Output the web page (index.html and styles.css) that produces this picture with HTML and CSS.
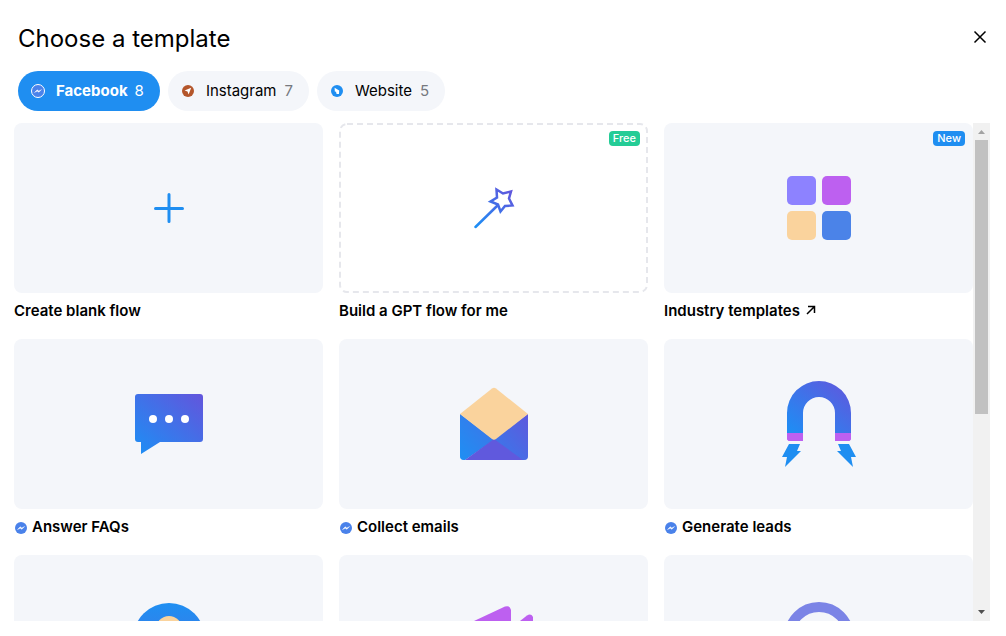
FILE: index.html
```
<!DOCTYPE html>
<html lang="en">
<head>
<meta charset="utf-8">
<title>Choose a template</title>
<link rel="stylesheet" href="styles.css">
</head>
<body>
<svg class="defs" aria-hidden="true">
  <defs>
    <linearGradient id="blend" x1="0" y1="1" x2="1" y2="0">
      <stop offset="0" stop-color="#1c8ff5"/>
      <stop offset="1" stop-color="#6355dc"/>
    </linearGradient>
    <linearGradient id="rise" x1="0" y1="0" x2="0" y2="1">
      <stop offset="0" stop-color="#1f8ff2"/>
      <stop offset="1" stop-color="#4a6ee0"/>
    </linearGradient>
    <symbol id="messenger" viewBox="0 0 12 12">
      <circle cx="6" cy="6" r="6" fill="#4a82ea"/>
      <path d="M2.5 7.6 5.2 4.8 6.8 6 9.6 4.5 6.9 7.3 5.3 6.2Z" fill="#fff" stroke="#fff" stroke-width=".4"/>
    </symbol>
  </defs>
</svg>
<main class="dialog">
  <header class="header">
    <h1 class="title">Choose a template</h1>
    <button class="close" type="button" aria-label="Close">
      <svg width="14" height="14" viewBox="0 0 14 14"><path d="M1.5 1.5 12.5 12.5M12.5 1.5 1.5 12.5" stroke="#000" stroke-width="1.5" fill="none"/></svg>
    </button>
  </header>
  <nav class="tabs">
    <button class="tab tab-active" type="button">
      <svg class="tab-icon" viewBox="0 0 16 16"><circle cx="8" cy="8" r="6.5" fill="#4a82ea" stroke="#fff"/><path d="M4.4 9.6 7.2 6.8 8.8 8 11.6 6.5 8.9 9.3 7.3 8.2Z" fill="#fff" stroke="#fff" stroke-width=".3"/></svg>
      <span class="tab-name">Facebook</span><span class="count">8</span>
    </button>
    <button class="tab" type="button">
      <svg class="tab-icon" viewBox="0 0 16 16"><circle cx="8" cy="8" r="6" fill="#b4562b"/><path d="M11.2 4.8 4.6 7.4 7.5 8.5 8.6 11.4Z" fill="#fff"/></svg>
      <span class="tab-name">Instagram</span><span class="count">7</span>
    </button>
    <button class="tab" type="button">
      <svg class="tab-icon" viewBox="0 0 16 16"><circle cx="8" cy="8" r="6" fill="#1f8ef1"/><path d="M5.6 4.8 10.2 7.4 10 11H7.6L7 8.8 5.8 8.6Z" fill="#fff"/></svg>
      <span class="tab-name">Website</span><span class="count">5</span>
    </button>
  </nav>
  <div class="body">
    <div class="viewport">
      <div class="grid">
        <button class="card" type="button">
          <span class="thumb">
            <svg class="art" viewBox="0 0 101 100"><path d="M51 36.5V63.5M37.500 50.500H64.500" stroke="#1f8ef1" stroke-width="3" stroke-linecap="round"/></svg>
          </span>
          <span class="label">Create blank flow</span>
        </button>
        <button class="card" type="button">
          <span class="thumb thumb-dashed">
            <svg class="dash" aria-hidden="true"><rect class="dash-line"/></svg>
            <svg class="art" viewBox="0 0 101 100"><path d="M53.500 31.500 60 35.500 68 33.500 66 40.500 69.500 47.500 62 48 57.500 53.500 55 46.500 47.500 43.500 54 39.500ZM54.500 47.500 32.500 69" fill="none" stroke="url(#blend)" stroke-width="2.500" stroke-linecap="round"/></svg>
            <span class="badge badge-free">Free</span>
          </span>
          <span class="label">Build a GPT flow for me</span>
        </button>
        <button class="card" type="button">
          <span class="thumb">
            <svg class="art" viewBox="0 0 101 100">
              <rect x="19" y="18" width="29" height="29" rx="5" fill="#8d82ff"/>
              <rect x="54" y="18" width="29" height="29" rx="5" fill="#bd60f0"/>
              <rect x="19" y="53" width="29" height="29" rx="5" fill="#fad39d"/>
              <rect x="54" y="53" width="29" height="29" rx="5" fill="#4b83e8"/>
            </svg>
            <span class="badge badge-new">New</span>
          </span>
          <span class="label">Industry templates
            <svg class="arrow" viewBox="0 0 10 10"><path d="M1 9 8.500 1.500M2 1.500H8.500V8" fill="none" stroke="#000" stroke-width="1.500"/></svg>
          </span>
        </button>
        <button class="card" type="button">
          <span class="thumb">
            <svg class="art" viewBox="0 0 101 100">
              <path d="M20 20H82a3 3 0 0 1 3 3V65a3 3 0 0 1-3 3H42L23 80V68H20a3 3 0 0 1-3-3V23a3 3 0 0 1 3-3Z" fill="url(#blend)"/>
              <circle cx="35" cy="45" r="4" fill="#fff"/><circle cx="51" cy="45" r="4" fill="#fff"/><circle cx="67" cy="45" r="4" fill="#fff"/>
            </svg>
          </span>
          <span class="label"><svg class="channel"><use href="#messenger"/></svg>Answer FAQs</span>
        </button>
        <button class="card" type="button">
          <span class="thumb">
            <svg class="art" viewBox="0 0 101 100">
              <path d="M17 40 51 66 22 86H21a4 4 0 0 1-4-4Z" fill="url(#blend)"/>
              <path d="M17 40 51 66 21 86a4 4 0 0 1-4-4Z" fill="#1f8ff2" fill-opacity=".5"/>
              <path d="M85 40 50 66 79 86H81a4 4 0 0 0 4-4Z" fill="url(#blend)"/>
              <path d="M85 40 50 66 79 86H81a4 4 0 0 0 4-4Z" fill="#5a5fdf" fill-opacity=".4"/>
              <path d="M51 65 80 86H22Z" fill="#6059dd"/>
              <path d="M49 14.500q2-1.500 4 0L85 40 53 65q-2 1.500-4 0L17 40Z" fill="#fad39d"/>
            </svg>
          </span>
          <span class="label"><svg class="channel"><use href="#messenger"/></svg>Collect emails</span>
        </button>
        <button class="card" type="button">
          <span class="thumb">
            <svg class="art" viewBox="0 0 101 100">
              <path d="M19 59V39a32 32 0 0 1 64 0V59H67V39a16 16 0 0 0-32 0V59Z" fill="url(#blend)"/>
              <path d="M19 59H35V67H20.500L19 65.500ZM67 59H83V65.500L81.500 67H67Z" fill="#bd60f0"/>
              <path d="M21 70H32L29 77H33L17 93 19 83H14ZM81 70H70L73 77H69L85 93 83 83H88Z" fill="#1f8ef1"/>
            </svg>
          </span>
          <span class="label"><svg class="channel"><use href="#messenger"/></svg>Generate leads</span>
        </button>
        <button class="card" type="button" aria-label="Template">
          <span class="thumb">
            <svg class="art" viewBox="0 0 101 100"><circle cx="51" cy="49" r="36" fill="url(#rise)"/><circle cx="51" cy="39" r="13" fill="#fad39d"/></svg>
          </span>
        </button>
        <button class="card" type="button" aria-label="Template">
          <span class="thumb">
            <svg class="art" viewBox="0 0 101 100">
              <path d="M31 31 62 16.500Q67 15 68 20V62L31 46Z" fill="#bd60f0"/>
              <path d="M77 31 84 25.500Q88 23 90 27V31L83 38Z" fill="#bd60f0"/>
            </svg>
          </span>
        </button>
        <button class="card" type="button" aria-label="Template">
          <span class="thumb">
            <svg class="art" viewBox="0 0 101 100"><circle cx="51" cy="47" r="30" fill="none" stroke="#7b84e6" stroke-width="10"/></svg>
          </span>
        </button>
      </div>
    </div>
    <div class="scrollbar" aria-hidden="true">
      <svg class="step" viewBox="0 0 17 17"><path d="M5 11 8.500 7 12 11Z" fill="#a3a3a3"/></svg>
      <div class="track"><div class="handle"></div></div>
      <svg class="step" viewBox="0 0 17 17"><path d="M5 6 8.500 10 12 6Z" fill="#505050"/></svg>
    </div>
  </div>
</main>
</body>
</html>
```
FILE: styles.css
```
* {
  box-sizing: border-box;
}

body {
  margin: 0;
  background: #fff;
  color: #000;
  font-family: Inter, "Liberation Sans", sans-serif;
  font-size: 15px;
}

button {
  border: 0;
  padding: 0;
  background: none;
  color: inherit;
  font: inherit;
  cursor: pointer;
}

svg {
  display: block;
  flex: none;
}

.defs {
  position: absolute;
  width: 0;
  height: 0;
}

.dialog {
  display: flex;
  flex-direction: column;
  height: 100vh;
  padding: 23px 16px 15px 14px;
}

.header {
  display: flex;
  align-items: flex-start;
  justify-content: space-between;
  padding-left: 4px;
}

.title {
  margin: 0;
  font-size: 24px;
  font-weight: 400;
  line-height: 32px;
}

.close {
  padding: 7px 3px;
}

.tabs {
  display: flex;
  gap: 8px;
  padding: 16px 4px 12px;
}

.tab {
  display: flex;
  align-items: center;
  height: 40px;
  padding: 0 16px 0 12px;
  border-radius: 20px;
  background: #f4f6fa;
}

.tab-active {
  background: #1f8ef1;
  color: #fff;
}

.tab-active .tab-name {
  font-weight: 700;
}

.tab-icon {
  width: 16px;
  height: 16px;
  margin-right: 10px;
}

.tab-name,
.count {
  padding-bottom: 2px;
}

.count {
  margin-left: 8px;
  color: #76797f;
}

.tab-active .count {
  margin-left: 7px;
  color: #fff;
}

.body {
  display: flex;
  flex: 1;
  min-height: 0;
}

.viewport {
  flex: 1;
  overflow: hidden;
}

.grid {
  display: grid;
  grid-template-columns: repeat(3, 1fr);
  gap: 18px 16px;
}

.card {
  display: flex;
  flex-direction: column;
  gap: 8px;
  text-align: left;
}

.thumb {
  position: relative;
  display: flex;
  align-items: center;
  justify-content: center;
  width: 100%;
  height: 170px;
  border-radius: 8px;
  background: #f4f6fa;
}

.thumb-dashed {
  background: #fff;
}

.dash {
  position: absolute;
  inset: 0;
  width: 100%;
  height: 100%;
}

.dash-line {
  x: 1px;
  y: 1px;
  width: calc(100% - 2px);
  height: calc(100% - 2px);
  rx: 7px;
  fill: none;
  stroke: #e6e7ec;
  stroke-width: 2px;
  stroke-dasharray: 6 4;
}

.art {
  width: 101px;
  height: 100px;
}

.badge {
  position: absolute;
  top: 8px;
  right: 8px;
  padding: 0 4px;
  border-radius: 4px;
  color: #fff;
  font-size: 11px;
  font-weight: 500;
  line-height: 15px;
}

.badge-free {
  background: #24cc96;
}

.badge-new {
  background: #1f8ef1;
}

.label {
  display: flex;
  align-items: center;
  font-weight: 600;
  line-height: 20px;
}

.channel {
  width: 12px;
  height: 12px;
  margin: 2px 5px 0 1px;
}

.arrow {
  width: 10px;
  height: 10px;
  margin: 0 0 3px 6px;
}

.scrollbar {
  display: flex;
  flex-direction: column;
  width: 17px;
  background: #f1f1f1;
}

.step {
  width: 17px;
  height: 17px;
}

.track {
  flex: 1;
  padding: 0 2px;
}

.handle {
  height: 59%;
  background: #c1c1c1;
}
```
